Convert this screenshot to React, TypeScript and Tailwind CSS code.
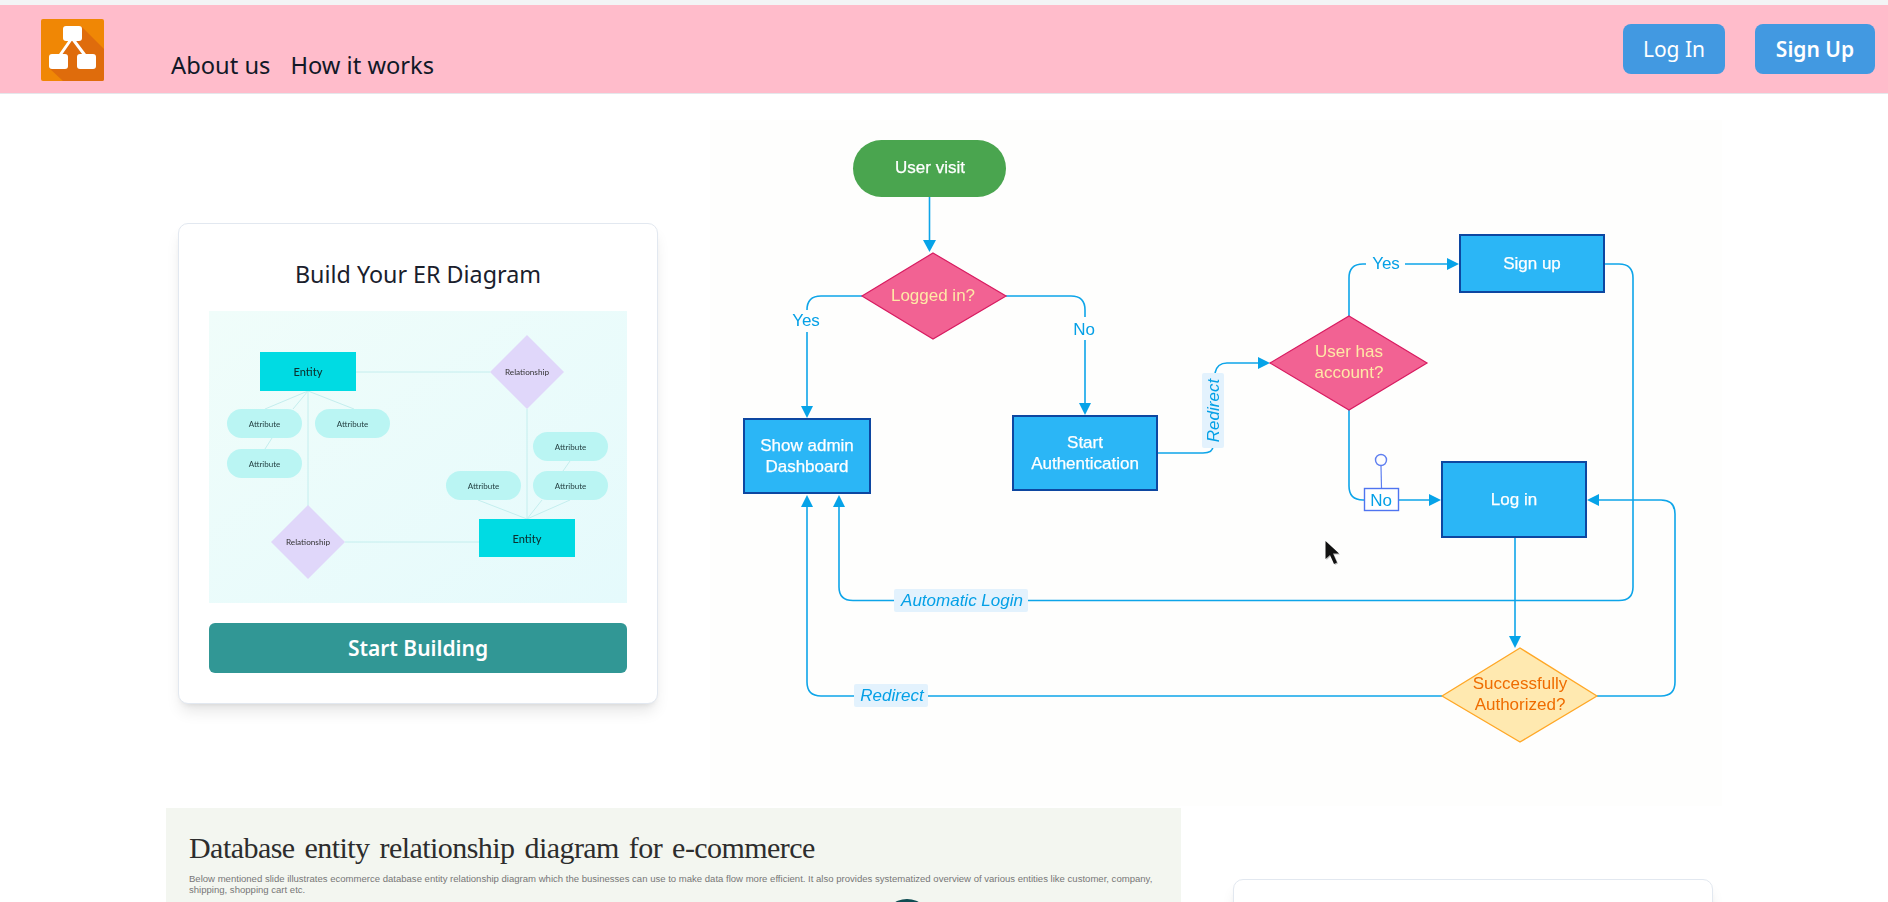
import React from 'react'

const LINE = '#0ea5e9'
const ARROW = '#06a3e8'
const LABEL = '#05a0e6'

function Logo() {
  return (
    <svg width="63" height="62" viewBox="41 19 63 62" className="shrink-0">
      <rect x="41" y="19" width="63" height="62" rx="2" fill="#f08705" />
      <path d="M82 27 L104 49 V79 Q104 81 102 81 H63 L49 68 Z" fill="#df6c0c" />
      <path d="M72 38 L58 58 M72 38 L87 58" stroke="#fff" strokeWidth="3" fill="none" />
      <rect x="63" y="26" width="19" height="15" rx="3" fill="#fff" />
      <rect x="49" y="54" width="19" height="15" rx="3" fill="#fff" />
      <rect x="77" y="54" width="19" height="15" rx="3" fill="#fff" />
    </svg>
  )
}

function Header() {
  return (
    <header className="mt-[5px] h-[89px] flex bg-[#ffbccb] border-b border-[#e5e7eb] pl-[41px] pr-[13px] font-['Noto_Sans',sans-serif]">
      <div className="pt-[14px]">
        <Logo />
      </div>
      <nav className="flex items-end gap-[20px] ml-[67px] pb-[9px] text-[23.7px] text-[#111827]">
        <a>About us</a>
        <a>How it works</a>
      </nav>
      <div className="ml-auto flex gap-[30px] pt-[19px] text-[21px]">
        <button className="h-[50px] w-[102px] pt-[1px] rounded-lg bg-[#4299e1] text-white">Log In</button>
        <button className="h-[50px] w-[120px] pt-[1px] rounded-lg bg-[#4299e1] text-white font-semibold">Sign Up</button>
      </div>
    </header>
  )
}

function ErDiagram() {
  const pills = [
    [227, 409], [315, 409], [227, 449], [533, 432], [446, 471], [533, 471],
  ]
  const links = [
    'M356 372H490', 'M527 409V519', 'M308 391V506', 'M345 542H479',
    'M308 391L265 409', 'M308 391L293 409', 'M308 391L354 409', 'M272 438L265 449',
    'M570 461L563 471', 'M527 519L478 500', 'M527 519L542 500', 'M527 519L570 500',
  ]
  return (
    <svg viewBox="209 311 418 292" className="block w-[418px] h-[292px] blur-[0.3px]" fontFamily="Lato, sans-serif">
      <defs>
        <linearGradient id="erBg" x1="0" y1="0" x2="1" y2="1">
          <stop offset="0" stopColor="#f0fdfa" />
          <stop offset="1" stopColor="#e5fafc" />
        </linearGradient>
      </defs>
      <rect x="209" y="311" width="418" height="292" fill="url(#erBg)" />
      {links.map(d => <path key={d} d={d} stroke="#c4eeee" strokeWidth="1" fill="none" />)}
      <rect x="260" y="352" width="96" height="39" fill="#00dbe3" />
      <rect x="479" y="519" width="96" height="38" fill="#00dbe3" />
      <path d="M527 335L564 372L527 409L490 372Z" fill="#e0d7fa" />
      <path d="M308 505L345 542L308 579L271 542Z" fill="#e0d7fa" />
      {pills.map(([x, y]) => (
        <g key={`${x}-${y}`}>
          <rect x={x} y={y} width="75" height="29" rx="14.5" fill="#baf5f3" />
          <text x={x + 37.5} y={y + 18} textAnchor="middle" fontSize="8" fill="#1f3a3c">Attribute</text>
        </g>
      ))}
      <text x="308" y="376" textAnchor="middle" fontSize="11" fontWeight="500" fill="#0b3030">Entity</text>
      <text x="527" y="543" textAnchor="middle" fontSize="11" fontWeight="500" fill="#0b3030">Entity</text>
      <text x="527" y="375" textAnchor="middle" fontSize="8.2" fill="#333">Relationship</text>
      <text x="308" y="545" textAnchor="middle" fontSize="8.2" fill="#333">Relationship</text>
    </svg>
  )
}

function Node({ x, y, w, h, lines }: { x: number; y: number; w: number; h: number; lines: string[] }) {
  const cx = x + w / 2
  const start = y + h / 2 + 6 - (lines.length - 1) * 10.5
  return (
    <g>
      <rect x={x + 1} y={y + 1} width={w - 2} height={h - 2} fill="#2bb6f6" stroke="#0d47a1" strokeWidth="2" />
      {lines.map((l, i) => (
        <text key={l} x={cx} y={start + i * 21 - 1} textAnchor="middle" fill="#fff" stroke="#fff" strokeWidth="0.25">{l}</text>
      ))}
    </g>
  )
}

function Label({ x, y, w, text, cx }: { x: number; y: number; w: number; text: string; cx: number }) {
  return (
    <g>
      <rect x={x} y={y} width={w} height="23" rx="2" fill="#e3f2fd" />
      <text x={cx} y={y + 17} textAnchor="middle" fontStyle="italic" fill={LABEL}>{text}</text>
    </g>
  )
}

function Flowchart() {
  const paths = [
    'M929.5 197V242',
    'M862 296H821Q807 296 807 310M807 332V408',
    'M1006 296H1071Q1085 296 1085 310V317M1085 340V405',
    'M1158 453H1203Q1213 453 1213 446M1215 373Q1217 363 1227 363H1260',
    'M1349 316V278Q1349 264 1363 264H1366M1405 264H1449',
    'M1349 410V486Q1349 500 1363 500H1364M1399 500H1431',
    'M1605 264H1619Q1633 264 1633 278V587Q1633 600.5 1619 600.5H1028M894 600.5H853Q839 600.5 839 587V505',
    'M1442 696H928M854 696H821Q807 696 807 682V505',
    'M1515 538V638',
    'M1597 696H1661Q1675 696 1675 682V514Q1675 500 1661 500H1597',
  ]
  const heads = [
    'M929.5 252L923 240H936Z',
    'M807 418L801 406H813Z',
    'M1085 415L1079 403H1091Z',
    'M1270 363L1258 357V369Z',
    'M1459 264L1447 258V270Z',
    'M1441 500L1429 494V506Z',
    'M1587 500L1599 494V506Z',
    'M1515 648L1509 636H1521Z',
    'M839 495L833 507H845Z',
    'M807 495L801 507H813Z',
  ]
  return (
    <svg viewBox="710 120 1012 686" className="block w-[1012px] h-[686px] bg-[#fefefd] blur-[0.25px]" fontFamily="'Liberation Sans', Arial, sans-serif" fontSize="17">
      {paths.map(d => <path key={d} d={d} stroke={LINE} strokeWidth="1.6" fill="none" />)}
      {heads.map(d => <path key={d} d={d} fill={ARROW} />)}

      <rect x="853" y="140" width="153" height="57" rx="28.5" fill="#4aa54f" />
      <text x="930" y="173" textAnchor="middle" fill="#fff" stroke="#fff" strokeWidth="0.25">User visit</text>

      <path d="M933 253L1006 296L933 339L862 296Z" fill="#f26293" stroke="#d81b60" strokeWidth="1.2" />
      <text x="933" y="301" textAnchor="middle" fill="#ffe8a6">Logged in?</text>
      <text x="806" y="326" textAnchor="middle" fill={LABEL}>Yes</text>
      <text x="1084" y="335" textAnchor="middle" fill={LABEL}>No</text>

      <Node x={743} y={418} w={128} h={76} lines={['Show admin', 'Dashboard']} />
      <Node x={1012} y={415} w={146} h={76} lines={['Start', 'Authentication']} />
      <Node x={1459} y={234} w={146} h={59} lines={['Sign up']} />
      <Node x={1441} y={461} w={146} h={77} lines={['Log in']} />

      <g transform="rotate(-90 1213 410.5)">
        <rect x="1175.5" y="399.5" width="75" height="22" rx="2" fill="#e3f2fd" />
        <text x="1213" y="416.5" textAnchor="middle" fontStyle="italic" fill={LABEL}>Redirect</text>
      </g>

      <path d="M1349 316L1427 363L1349 410L1270 363Z" fill="#f26293" stroke="#d81b60" strokeWidth="1.2" />
      <text x="1349" y="357" textAnchor="middle" fill="#ffe8a6">User has</text>
      <text x="1349" y="378" textAnchor="middle" fill="#ffe8a6">account?</text>
      <text x="1386" y="269" textAnchor="middle" fill={LABEL}>Yes</text>

      <path d="M1381 466L1381.5 488" stroke="#5f7ff0" strokeWidth="1.2" />
      <circle cx="1381" cy="460" r="5.5" fill="#fdfdfd" stroke="#5f7ff0" strokeWidth="1.4" />
      <rect x="1364.5" y="488.5" width="34" height="22" fill="#fff" stroke="#4f74f0" strokeWidth="1.4" />
      <text x="1381" y="506" textAnchor="middle" fill={LABEL}>No</text>

      <Label x={894} y={589} w={134} text="Automatic Login" cx={962} />
      <Label x={854} y={684} w={74} text="Redirect" cx={892} />

      <path d="M1520 648L1597 696L1520 742L1442 696Z" fill="#ffe9b0" stroke="#ffa726" strokeWidth="1.4" strokeLinejoin="round" />
      <text x="1520" y="689" textAnchor="middle" fill="#ef6c00">Successfully</text>
      <text x="1520" y="710" textAnchor="middle" fill="#ef6c00">Authorized?</text>

      {/* mouse pointer caught in the capture */}
      <path d="M1325.5 541V559L1330 555L1334 564L1337 562.5L1333 553.5L1339 553.5Z" fill="#888" opacity="0.55" transform="translate(1 1)" />
      <path d="M1325.5 541V559L1330 555L1334 564L1337 562.5L1333 553.5L1339 553.5Z" fill="#111" />
    </svg>
  )
}

export default function App() {
  return (
    <div className="h-[902px] overflow-hidden bg-white font-['Noto_Sans',sans-serif]">
      <div className="h-[5px] -mb-[5px] bg-[#f3f4f6]" />
      <Header />
      <main>
        <section className="flex items-center h-[712px] pt-[26px] pl-[178px]">
          <div className="w-[480px] h-[481px] rounded-[10px] border border-[#e2e8f0] bg-white shadow-lg px-[30px] pt-[30px]">
            <h2 className="h-[57px] text-center text-[23.3px] leading-[40px] text-[#1a202c]">Build Your ER Diagram</h2>
            <ErDiagram />
            <button className="mt-[20px] h-[50px] w-[418px] pt-[2px] rounded-md bg-[#319795] text-white text-[21px] font-semibold">Start Building</button>
          </div>
          <div className="ml-[52px]">
            <Flowchart />
          </div>
        </section>
        <section className="flex pl-[166px] pt-[2px]">
          <div className="w-[1015px] h-[200px] bg-[#f3f6f0] pl-[23px] pr-[10px] pt-[22px]">
            <h2 className="font-['Liberation_Serif',serif] text-[30px] leading-[36px] tracking-[-0.55px] [word-spacing:3px] text-[#2d2d2d]">Database entity relationship diagram for e-commerce</h2>
            <p className="mt-[7px] font-['Liberation_Sans',sans-serif] text-[9.55px] leading-[11px] text-[#777]">Below mentioned slide illustrates ecommerce database entity relationship diagram which the businesses can use to make data flow more efficient. It also provides systematized overview of various entities like customer, company, shipping, shopping cart etc.</p>
            <div className="mt-[4px] ml-[694px] w-[48px] h-[48px] rounded-full bg-[#0f4c52]" />
          </div>
          <div className="ml-[52px] mt-[71px] w-[480px] h-[300px] rounded-[10px] border border-[#e2e8f0] bg-white shadow-lg" />
        </section>
      </main>
    </div>
  )
}
